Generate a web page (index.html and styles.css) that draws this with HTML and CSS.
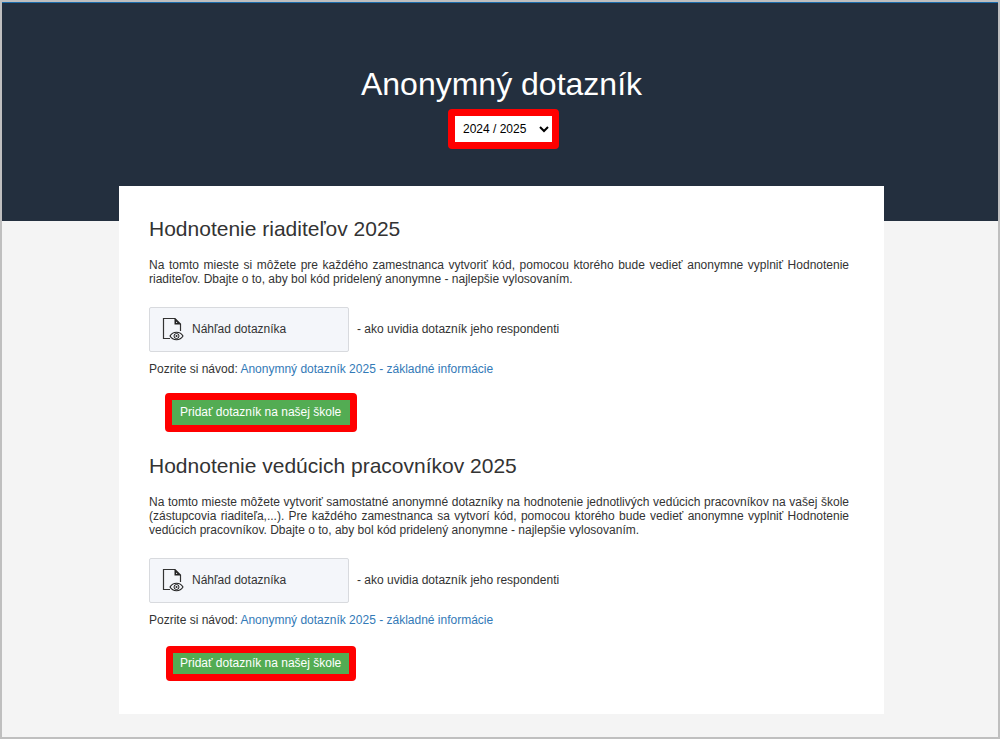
FILE: index.html
```html
<!DOCTYPE html>
<html lang="sk">
<head>
    <meta charset="UTF-8">
    <meta name="viewport" content="width=device-width, initial-scale=1.0">
    <title>Anonymný dotazník</title>
    <link rel="stylesheet" href="styles.css">
</head>
<body>
    <div class="page">
        <header class="header">
            <h1>Anonymný dotazník</h1>
            <select class="year-select" aria-label="Školský rok">
                <option>2024 / 2025</option>
            </select>
        </header>

        <main class="content">
            <div class="card">
                <section class="survey">
                    <h2>Hodnotenie riaditeľov 2025</h2>
                    <p class="intro">Na tomto mieste si môžete pre každého zamestnanca vytvoriť kód, pomocou ktorého bude vedieť anonymne vyplniť Hodnotenie riaditeľov. Dbajte o to, aby bol kód pridelený anonymne - najlepšie vylosovaním.</p>
                    <div class="preview">
                        <a class="preview-link" href="#">
                            <svg class="preview-icon" viewBox="0 0 24 24" width="24" height="24" aria-hidden="true">
                                <path d="M9 21.500H2.500V1.500H14L19.500 7V14" fill="none" stroke="#333" stroke-width="1.200"/>
                                <path d="M13.500 1V7.500H20Z" fill="#222"/>
                                <path d="M15 4.500V6H16.500Z" fill="#f4f6fa"/>
                                <path d="M9 19C12 14 19 14 22 19C19 24 12 24 9 19Z" fill="#f4f6fa" stroke="#222" stroke-width="1.100"/>
                                <circle cx="15.500" cy="19" r="2.500" fill="none" stroke="#222"/>
                                <circle cx="15.500" cy="19" r="1" fill="#222"/>
                            </svg>
                            Náhľad dotazníka
                        </a>
                        <span class="preview-note">- ako uvidia dotazník jeho respondenti</span>
                    </div>
                    <p class="guide">Pozrite si návod: <a href="#">Anonymný dotazník 2025 - základné informácie</a></p>
                    <button class="add-button" type="button">Pridať dotazník na našej škole</button>
                </section>

                <section class="survey">
                    <h2>Hodnotenie vedúcich pracovníkov 2025</h2>
                    <p class="intro">Na tomto mieste môžete vytvoriť samostatné anonymné dotazníky na hodnotenie jednotlivých vedúcich pracovníkov na vašej škole (zástupcovia riaditeľa,...). Pre každého zamestnanca sa vytvorí kód, pomocou ktorého bude vedieť anonymne vyplniť Hodnotenie vedúcich pracovníkov. Dbajte o to, aby bol kód pridelený anonymne - najlepšie vylosovaním.</p>
                    <div class="preview">
                        <a class="preview-link" href="#">
                            <svg class="preview-icon" viewBox="0 0 24 24" width="24" height="24" aria-hidden="true">
                                <path d="M9 21.500H2.500V1.500H14L19.500 7V14" fill="none" stroke="#333" stroke-width="1.200"/>
                                <path d="M13.500 1V7.500H20Z" fill="#222"/>
                                <path d="M15 4.500V6H16.500Z" fill="#f4f6fa"/>
                                <path d="M9 19C12 14 19 14 22 19C19 24 12 24 9 19Z" fill="#f4f6fa" stroke="#222" stroke-width="1.100"/>
                                <circle cx="15.500" cy="19" r="2.500" fill="none" stroke="#222"/>
                                <circle cx="15.500" cy="19" r="1" fill="#222"/>
                            </svg>
                            Náhľad dotazníka
                        </a>
                        <span class="preview-note">- ako uvidia dotazník jeho respondenti</span>
                    </div>
                    <p class="guide">Pozrite si návod: <a href="#">Anonymný dotazník 2025 - základné informácie</a></p>
                    <button class="add-button compact" type="button">Pridať dotazník na našej škole</button>
                </section>
            </div>
        </main>
    </div>
</body>
</html>
```
FILE: styles.css
```css
* {
    box-sizing: border-box;
}

body {
    margin: 0;
    font-family: "Liberation Sans", Arial, sans-serif;
    font-size: 12px;
    line-height: 14px;
    color: #333;
}

h1, h2, p {
    margin: 0;
    font-weight: normal;
}

a {
    color: #337ab7;
    text-decoration: none;
}

.page {
    min-height: 100vh;
    padding-bottom: 23px;
    border: 2px solid #bfbfbf;
    background: #f4f4f4;
}

.header {
    display: flex;
    flex-direction: column;
    align-items: center;
    padding: 61px 0 72px 3px;
    border-top: 1px solid #1c6cab;
    background: #232f3e;
}

.header h1 {
    margin-bottom: 5px;
    font-size: 32px;
    line-height: 40px;
    color: #fff;
}

.year-select {
    height: 40px;
    width: 111px;
    margin-left: 4px;
    padding: 0 4px;
    border: 7px solid #f00;
    border-radius: 4px;
    background: #fff;
    color: #000;
    font-family: inherit;
    font-size: 12px;
}

.content {
    padding-left: 3px;
}

.card {
    max-width: 765px;
    margin: -35px auto 0;
    padding: 30px 35px 33px 30px;
    background: #fff;
}

.survey + .survey {
    margin-top: 21px;
}

.survey h2 {
    margin-bottom: 16px;
    font-size: 21px;
    line-height: 26px;
}

.intro {
    margin-bottom: 21px;
    text-align: justify;
}

.preview {
    display: flex;
    align-items: center;
    gap: 8px;
    margin-bottom: 10px;
}

.preview-link {
    display: flex;
    align-items: center;
    gap: 7px;
    width: 200px;
    height: 45px;
    padding: 0 11px 2px;
    border: 1px solid #d8dade;
    border-radius: 2px;
    background: #f4f6fa;
    color: #333;
}

.preview-note {
    padding-bottom: 2px;
}

.guide {
    margin-bottom: 17px;
}

.add-button {
    display: block;
    height: 39px;
    margin-left: 16px;
    padding: 0 9px 2px 8px;
    border: 7px solid #f00;
    border-radius: 4px;
    background: #53ac53;
    color: #fff;
    font-family: inherit;
    font-size: 12px;
    line-height: 14px;
}

.add-button.compact {
    height: 35px;
    margin: 19px 0 0 17px;
    padding: 0 8px 2px 7px;
}
```
